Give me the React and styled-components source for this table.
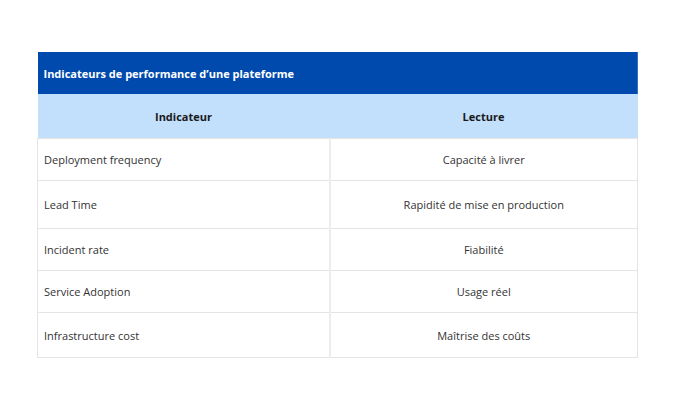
import styled, { createGlobalStyle } from "styled-components"

const Global = createGlobalStyle`
  html, body {
    margin: 0;
    padding: 0;
    background: #ffffff;
  }
  body {
    font-family: "Open Sans", "Liberation Sans", sans-serif;
  }
`

const Page = styled.div`
  height: 410px;
  display: flex;
  align-items: flex-start;
  justify-content: center;
  padding-top: 52px;
  box-sizing: border-box;
`

const Table = styled.table`
  width: 601px;
  border-collapse: collapse;
  table-layout: fixed;
  font-size: 11px;
  color: #333333;
`

const Title = styled.th`
  background: #004aad;
  color: #ffffff;
  font-weight: 700;
  text-align: left;
  height: 42px;
  padding: 0 6px;
  box-sizing: border-box;
  border-right: 1px solid #3a6fc0;
`

const HeadCell = styled.th`
  background: #c2e0fc;
  color: #1a1a1a;
  font-weight: 700;
  text-align: center;
  height: 44px;
  padding: 0 6px;
`

const Row = styled.tr`
  height: ${(p) => p.$h}px;
`

const Cell = styled.td`
  border: 1px solid #e4e4e4;
  padding: 0 6px;
  text-align: ${(p) => (p.$center ? "center" : "left")};
  vertical-align: middle;
  ${(p) => (p.$center ? "" : "border-right: 2px solid #ececec;")}
`

const rows = [
  ["Deployment frequency", "Capacité à livrer", 42],
  ["Lead Time", "Rapidité de mise en production", 48],
  ["Incident rate", "Fiabilité", 42],
  ["Service Adoption", "Usage réel", 42],
  ["Infrastructure cost", "Maîtrise des coûts", 45],
]

const App = () => {
  return (
    <Page>
      <Global />
      <Table>
        <colgroup>
          <col style={{ width: 292 }} />
          <col />
        </colgroup>
        <thead>
          <tr>
            <Title colSpan={2}>Indicateurs de performance d’une plateforme</Title>
          </tr>
          <tr>
            <HeadCell>Indicateur</HeadCell>
            <HeadCell>Lecture</HeadCell>
          </tr>
        </thead>
        <tbody>
          {rows.map(([name, reading, h]) => (
            <Row key={name} $h={h}>
              <Cell>{name}</Cell>
              <Cell $center>{reading}</Cell>
            </Row>
          ))}
        </tbody>
      </Table>
    </Page>
  )
}

export default App
